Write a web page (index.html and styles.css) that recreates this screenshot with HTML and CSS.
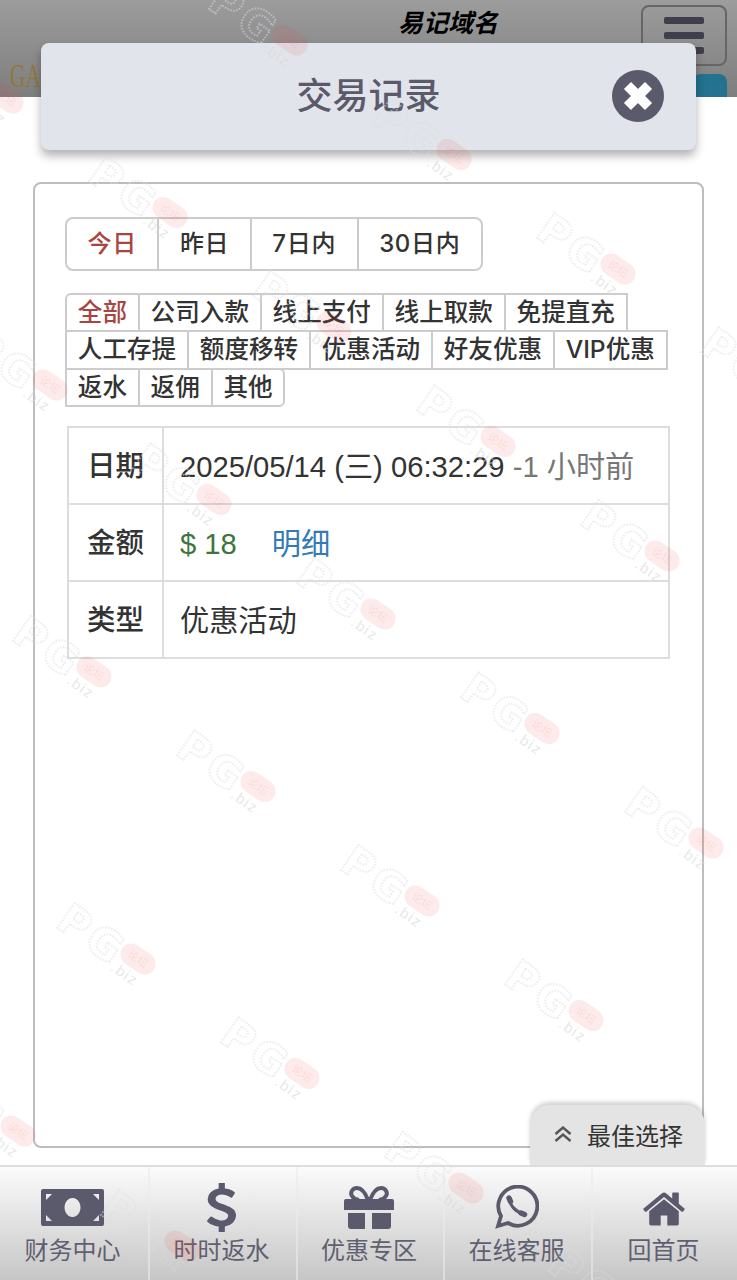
FILE: index.html
```html
<!DOCTYPE html>
<html>

<head>
    <title>交易记录</title>
    <link rel="stylesheet" href="styles.css">
</head>

<body>
    <div class="page">
        <header class="topbar">
            <div class="brand-box"><span class="brand">GA</span></div>
            <span class="site-name">易记域名</span>
            <div class="menu-col">
                <div class="menu-btn"><i></i><i></i><i></i></div>
                <div class="blue-btn"></div>
            </div>
        </header>

        <main class="sheet">
            <div class="modal-head">
                <h1>交易记录</h1>
                <svg class="close-icon" viewBox="0 0 52 52">
                    <circle cx="26" cy="26" r="26" fill="#5a5a6c" />
                    <path d="M19 19L33 33M33 19L19 33" stroke="#fff" stroke-width="10" stroke-linecap="square" />
                </svg>
            </div>

            <section class="panel">
                <div class="tabs">
                    <a class="tab active">今日</a>
                    <a class="tab">昨日</a>
                    <a class="tab">7日内</a>
                    <a class="tab">30日内</a>
                </div>

                <div class="filters">
                    <a class="filter active first">全部</a>
                    <a class="filter">公司入款</a>
                    <a class="filter">线上支付</a>
                    <a class="filter">线上取款</a>
                    <a class="filter">免提直充</a>
                    <a class="filter">人工存提</a>
                    <a class="filter">额度移转</a>
                    <a class="filter">优惠活动</a>
                    <a class="filter">好友优惠</a>
                    <a class="filter">VIP优惠</a>
                    <a class="filter">返水</a>
                    <a class="filter">返佣</a>
                    <a class="filter last">其他</a>
                </div>

                <table class="record">
                    <tr>
                        <th>日期</th>
                        <td>2025/05/14 (三) 06:32:29 <span class="muted">-1 小时前</span></td>
                    </tr>
                    <tr>
                        <th>金额</th>
                        <td><span class="money">$ 18</span><a class="detail">明细</a></td>
                    </tr>
                    <tr>
                        <th>类型</th>
                        <td>优惠活动</td>
                    </tr>
                </table>
            </section>

            <div class="best-pick">
                <svg class="chevrons" viewBox="0 0 18 16">
                    <path d="M1.5 8L9 1.5L16.5 8M1.5 15L9 8.5L16.5 15" fill="none" stroke="#555" stroke-width="2.4" />
                </svg>
                最佳选择
            </div>
        </main>

        <nav class="bottom-nav">
            <a class="nav-item">
                <div class="icon-box">
                    <svg width="63" height="37" viewBox="0 0 63 37">
                        <path fill-rule="evenodd" fill="#5a5a6c" d="M2 0H61a2 2 0 0 1 2 2V35a2 2 0 0 1-2 2H2a2 2 0 0 1-2-2V2a2 2 0 0 1 2-2ZM31.500 9a8 9.500 0 1 0 .01 0ZM5 5V11L11 5ZM58 5H52L58 11ZM5 32H11L5 26ZM58 32V26L52 32Z" />
                    </svg>
                </div>
                <span>财务中心</span>
            </a>
            <a class="nav-item">
                <div class="icon-box">
                    <svg width="29" height="49" viewBox="430 10 932 1772" preserveAspectRatio="none">
                        <path fill="#5a5a6c" d="M1362 1185q0 153-99.500 263.500t-258.500 136.500v175q0 14-9 23t-23 9h-135q-13 0-22.500-9.500t-9.500-22.500v-175q-66-9-127.500-31t-101.500-44.500-74-48-46.500-37.500-17.500-18q-17-21-2-41l103-135q7-10 23-12 15-2 24 9l2 2q113 99 243 125 37 8 74 8 81 0 142.500-43t61.500-122q0-28-15-53t-33.500-42-58.500-37.500-66-32-80-32.500q-39-16-61.500-25t-61.500-26.500-62.500-31-56.500-35.500-53.500-42.500-43.500-49-35.500-58-21-66.500-8.500-78q0-138 98-242t255-134v-180q0-13 9.500-22.500t22.500-9.500h135q14 0 23 9t9 23v176q57 6 110.500 23t87 33.500 63.500 37.500 39 29 15 14q17 18 5 38l-81 146q-8 15-23 16-14 3-27-7-3-3-14.500-12t-39-26.500-58.500-32-74.500-26-85.500-11.500q-95 0-155 43t-60 111q0 26 8.500 48t29.500 41.500 39.500 33 56 31 60.500 27 70 27.500q53 20 81 31.500t76 35 75.500 42.500 62 50 53 63.500 31.500 76.500 13 94z" />
                    </svg>
                </div>
                <span>时时返水</span>
            </a>
            <a class="nav-item">
                <div class="icon-box">
                    <svg width="50" height="43" viewBox="0 0 50 43">
                        <path fill="none" stroke="#5a5a6c" stroke-width="4" d="M24 14C21 6 17 2 13 2C8 2 6 7 8 10C9.500 12.500 12 13.500 15 14M26 14C29 6 33 2 37 2C42 2 44 7 42 10C40.500 12.500 38 13.500 35 14" />
                        <path fill="#5a5a6c" d="M2 13H48a2 2 0 0 1 2 2V24H0V15a2 2 0 0 1 2-2ZM4 27H21V43H7a3 3 0 0 1-3-3ZM28 27H47V40a3 3 0 0 1-3 3H28Z" />
                    </svg>
                </div>
                <span>优惠专区</span>
            </a>
            <a class="nav-item">
                <div class="icon-box">
                    <svg width="44" height="44" viewBox="0 0 44 44">
                        <path fill="none" stroke="#5a5a6c" stroke-width="3.800" d="M3 41L6 31A19.500 19.500 0 1 1 13 38Z" />
                        <path fill="none" stroke="#5a5a6c" stroke-width="3.200" d="M14.500 14C15 21 22 28 29.500 29" />
                        <path fill="none" stroke="#5a5a6c" stroke-width="5.500" stroke-linecap="round" d="M14 13L15.500 16.500M26 28L29.500 29.500" />
                    </svg>
                </div>
                <span>在线客服</span>
            </a>
            <a class="nav-item">
                <div class="icon-box home">
                    <svg width="46" height="46" viewBox="0 0 1792 1792">
                        <path fill="#5a5a6c" d="M1472 992v480q0 26-19 45t-45 19h-384v-384h-256v384h-384q-26 0-45-19t-19-45v-480q0-1 .5-3t.5-3l575-474 575 474q1 2 1 6zm223-69l-62 74q-8 9-21 11h-3q-13 0-21-7l-692-577-692 577q-12 8-24 7-13-2-21-11l-62-74q-8-10-7-23.500t11-21.500l719-599q32-26 76-26t76 26l244 204v-195q0-14 9-23t23-9h192q14 0 23 9t9 23v408l219 182q10 8 11 21.500t-7 23.500z" />
                    </svg>
                </div>
                <span>回首页</span>
            </a>
        </nav>

        <!-- forum watermark laid over the whole page -->
        <svg class="watermark" width="737" height="1280" viewBox="0 0 737 1280">
            <defs>
                <g id="mark" transform="rotate(35)">
                    <text class="wm-letters" x="-88" y="21">PG</text>
                    <text class="wm-biz" x="-17" y="25">.biz</text>
                    <rect class="wm-pill" x="-19" y="-11" width="38" height="22" rx="11" />
                    <text class="wm-forum" x="0" y="4">论坛</text>
                </g>
            </defs>
            <use href="#mark" transform="translate(290 40)" />
            <use href="#mark" transform="translate(454 154.500)" />
            <use href="#mark" transform="translate(618 269)" />
            <use href="#mark" transform="translate(782 383.500)" />
            <use href="#mark" transform="translate(6 98)" />
            <use href="#mark" transform="translate(170 212.500)" />
            <use href="#mark" transform="translate(334 327)" />
            <use href="#mark" transform="translate(498 441.500)" />
            <use href="#mark" transform="translate(662 556)" />
            <use href="#mark" transform="translate(50 385)" />
            <use href="#mark" transform="translate(214 499.500)" />
            <use href="#mark" transform="translate(378 614)" />
            <use href="#mark" transform="translate(542 728.500)" />
            <use href="#mark" transform="translate(706 843)" />
            <use href="#mark" transform="translate(94 672)" />
            <use href="#mark" transform="translate(258 786.500)" />
            <use href="#mark" transform="translate(422 901)" />
            <use href="#mark" transform="translate(586 1015.500)" />
            <use href="#mark" transform="translate(138 959)" />
            <use href="#mark" transform="translate(302 1073.500)" />
            <use href="#mark" transform="translate(466 1188)" />
            <use href="#mark" transform="translate(630 1302.500)" />
            <use href="#mark" transform="translate(18 1131)" />
            <use href="#mark" transform="translate(182 1246)" />
        </svg>
    </div>
</body>

</html>
```

FILE: styles.css
```css
* {
    margin: 0;
    padding: 0;
    box-sizing: border-box;
    font-family: "Liberation Sans", "Noto Sans CJK SC", sans-serif;
}

body {
    background: #fff;
}

.page {
    position: relative;
    width: 737px;
    height: 1280px;
    overflow: hidden;
    display: flex;
    flex-direction: column;
}

/* darkened page behind the dialog */
.topbar {
    height: 97px;
    flex: none;
    display: flex;
    padding: 5px 10px 0 10px;
    background: linear-gradient(#9c9c9c, #7e7e7e);
}

.brand-box {
    width: 232px;
    margin-top: 53px;
}

.brand {
    display: inline-block;
    font-family: "Liberation Serif", serif;
    font-size: 33px;
    color: #8f7838;
    transform: scaleX(0.65);
    transform-origin: left;
}

.site-name {
    width: 399px;
    margin-top: 3px;
    padding-left: 156px;
    font-size: 25px;
    line-height: 30px;
    font-weight: bold;
    font-style: italic;
    color: #000;
}

.menu-col {
    width: 86px;
    display: flex;
    flex-direction: column;
    align-items: flex-end;
}

.menu-btn {
    width: 86px;
    height: 61px;
    flex: none;
    padding: 10px 21px 0;
    border: 2px solid #666;
    border-radius: 8px;
}

.menu-btn i {
    display: block;
    height: 7px;
    margin-bottom: 8px;
    border-radius: 2px;
    background: #3e3e4c;
}

.blue-btn {
    width: 34px;
    height: 40px;
    margin-top: 8px;
    flex: none;
    border-radius: 8px 8px 0 0;
    background: #23728f;
}

.sheet {
    position: relative;
    flex: 1;
    padding: 0 33px;
    background: #fff;
    border-radius: 12px 12px 0 0;
}

.modal-head {
    position: relative;
    width: 655px;
    height: 107px;
    margin: -54px 0 0 8px;
    padding-bottom: 8px;
    display: flex;
    align-items: center;
    justify-content: center;
    background: #e1e4ea;
    border-radius: 8px;
    box-shadow: 0 6px 10px rgba(0, 0, 0, 0.3);
}

.modal-head h1 {
    font-size: 36px;
    font-weight: 500;
    color: #5a5a6a;
}

.close-icon {
    position: absolute;
    top: 27px;
    right: 32px;
    width: 52px;
    height: 52px;
}

.panel {
    height: 966px;
    margin-top: 32px;
    padding: 33px 30px 0;
    border: 2px solid #bdbdbd;
    border-radius: 8px;
}

.tabs {
    display: flex;
    width: max-content;
}

.tab {
    height: 54px;
    padding: 0 20.500px 5px;
    margin-right: -2px;
    display: flex;
    align-items: center;
    font-family: "Inter", "Noto Sans CJK SC", sans-serif;
    font-size: 24px;
    font-weight: 500;
    letter-spacing: 0.700px;
    color: #333;
    border: 2px solid #ccc;
}

.tab:first-child {
    border-radius: 8px 0 0 8px;
}

.tab:last-child {
    margin-right: 0;
    border-radius: 0 8px 8px 0;
}

.tab.active,
.filter.active {
    color: #a94442;
}

.filters {
    width: 610px;
    margin-top: 21.500px;
    display: flex;
    flex-wrap: wrap;
}

.filter {
    height: 39.500px;
    padding: 0 10.800px 5px;
    margin: 0 -2px -2px 0;
    display: flex;
    align-items: center;
    font-family: "Inter", "Noto Sans CJK SC", sans-serif;
    font-size: 24.600px;
    font-weight: 500;
    color: #333;
    border: 2px solid #ccc;
}

.filter.first {
    border-radius: 6px 0 0 0;
}

.filter.last {
    border-radius: 0 6px 6px 0;
}

.record {
    width: 603px;
    margin: 21px 0 0 2px;
    border-collapse: collapse;
    font-size: 29.200px;
    color: #333;
}

.record th,
.record td {
    height: 77px;
    padding-bottom: 4px;
    border: 2px solid #ddd;
}

.record th {
    width: 95px;
    font-size: 28.500px;
    font-weight: 500;
    text-align: center;
}

.record td {
    padding-left: 16px;
    font-weight: normal;
    white-space: nowrap;
}

.muted {
    color: #777;
}

.money {
    color: #3c763d;
}

.detail {
    margin-left: 35px;
    color: #337ab7;
}

.best-pick {
    position: absolute;
    right: 32px;
    bottom: 0;
    width: 175px;
    height: 60px;
    padding: 0 0 2px 24px;
    display: flex;
    align-items: center;
    gap: 15px;
    font-size: 24px;
    color: #333;
    background: #e4e4e4;
    border-radius: 20px 20px 0 0;
    box-shadow: 0 -3px 4px rgba(0, 0, 0, 0.18);
}

.chevrons {
    width: 18px;
    height: 16px;
}

.bottom-nav {
    height: 115px;
    flex: none;
    display: grid;
    grid-template-columns: 150px 148px 147px 148px 1fr;
    background: linear-gradient(#fbfbfb, #c6c6c6);
    border-top: 2px solid #ddd;
}

.nav-item {
    height: 100%;
    padding: 15px 3px 0 0;
    display: flex;
    flex-direction: column;
    align-items: center;
    font-size: 24px;
    color: #5f5f70;
    border-right: 2px solid rgba(235, 235, 235, 0.6);
}

.nav-item:last-child {
    border-right: none;
}

.icon-box {
    height: 50px;
    margin-bottom: 3px;
    display: flex;
    align-items: center;
    justify-content: center;
}

.icon-box.home {
    padding-top: 4px;
}

.nav-item span {
    line-height: 32px;
}

.watermark {
    position: absolute;
    top: 0;
    left: 0;
    pointer-events: none;
}

.wm-letters {
    font-family: "DejaVu Sans", sans-serif;
    font-size: 42px;
    font-weight: bold;
    letter-spacing: 4px;
    fill: none;
    stroke: rgba(222, 222, 230, 0.55);
    stroke-width: 2;
    stroke-dasharray: 1.500 1.500;
}

.wm-biz {
    font-size: 15px;
    letter-spacing: 1.500px;
    fill: rgba(215, 215, 215, 0.6);
}

.wm-pill {
    fill: rgba(235, 70, 70, 0.11);
}

.wm-forum {
    font-size: 11px;
    text-anchor: middle;
    fill: rgba(235, 70, 70, 0.13);
}
```
